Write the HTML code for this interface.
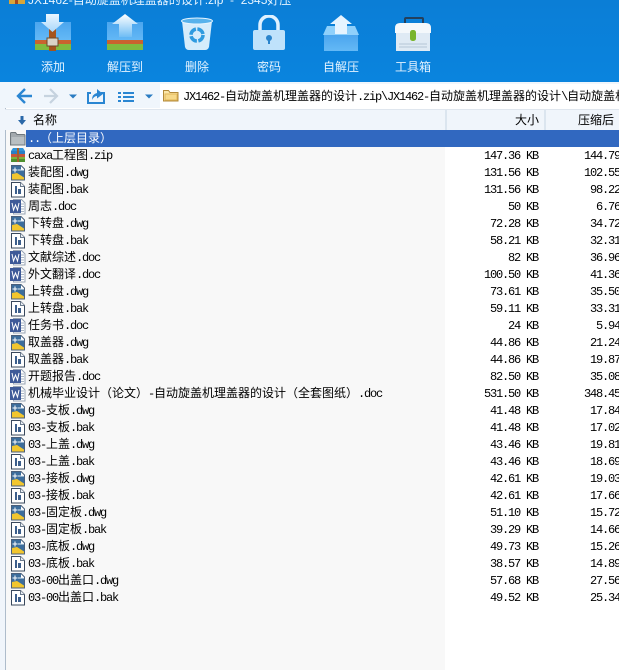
<!DOCTYPE html>
<html><head><meta charset="utf-8">
<style>
*{margin:0;padding:0;box-sizing:border-box}
html,body{width:619px;height:670px;overflow:hidden;background:#fff}
body{position:relative;font-family:"Liberation Mono","WenQuanYi Zen Hei","Noto Sans CJK SC",monospace;font-size:12px;color:#000}
.abs{position:absolute}
#top{left:0;top:0;width:619px;height:82px;background:linear-gradient(#0b7ed6,#0a84de);overflow:hidden}
.tb{position:absolute;top:59px;width:60px;text-align:center;color:#e4f3ff;font-size:12px;line-height:16px;font-family:"WenQuanYi Zen Hei","Noto Sans CJK SC",sans-serif}
#nav{left:0;top:82px;width:619px;height:26px;background:#f0f6fc}
#addr{left:160px;top:84px;width:459px;height:24px;background:#fff;white-space:nowrap;overflow:hidden;line-height:27px;padding-left:23px}
#hd{left:5px;top:109px;width:614px;height:21px;background:#f0f5fb;border-top:1px solid #dfe6ee;font-family:"WenQuanYi Zen Hei","Noto Sans CJK SC",sans-serif;line-height:19px}
#name{left:5px;top:130px;width:440px;height:540px;background:#f8f8f8}
#strip{left:0;top:108px;width:6px;height:562px;background:#f0f5fb;border-right:1px solid #aebccb}
#sel{left:26px;top:130px;width:593px;height:17px;background:#3168c0}
.r{position:absolute;left:0;width:619px;height:17px;line-height:17px;white-space:nowrap}
.n{position:absolute;left:28px;top:1px}
.s{position:absolute;right:81px;top:1px}
.p{position:absolute;right:-19px;top:1px}
i{font-style:normal;font-size:12px;letter-spacing:-1.2px}
.ic{position:absolute;left:10px;top:0;width:16px;height:17px}
</style></head><body>
<svg width="0" height="0" style="position:absolute"><defs>
<symbol id="dwg" viewBox="0 0 16 17"><path d="M1.500 1.500H11l3.500 3.500V16H1.500z" fill="#fff" stroke="#4a5f7a"/><path d="M2 2h9v4h3v9.500H2z" fill="#3c6d9c"/><path d="M2 10L7 9 14 13.500v2H2z" fill="#f2c62e"/><path d="M5 3.500v5M2.500 6h5" stroke="#fff"/><path d="M8 6h6" stroke="#e5eef6"/></symbol>
<symbol id="bak" viewBox="0 0 16 17"><path d="M1.500 1.500H10.500L14.500 5.500V16H1.500z" fill="#fff" stroke="#39485c"/><path d="M10.500 1.500V5.500H14.500" fill="#e8edf3" stroke="#6b7a8c"/><path d="M5 5h2v8H5zM8 8h3v5H8z" fill="#3d5f8c"/></symbol>
<symbol id="doc" viewBox="0 0 16 17"><path d="M3.500 1.500H11.500L15 5V16H3.500z" fill="#fff" stroke="#97a3b3"/><path d="M11 6h3M11 8.500h3M11 11h3M11 13.500h3" stroke="#aab6c4"/><rect x="0" y="2" width="11" height="13" fill="#3e5a98"/><path d="M2 5l1.500 7 2-5 2 5L9 5" fill="none" stroke="#fff"/></symbol>
<symbol id="zip" viewBox="0 0 16 17"><path d="M1 4l2-3h10l2 3z" fill="#2f93d8"/><rect x="1" y="4" width="14" height="3" fill="#2a7fc4"/><rect x="1" y="7" width="14" height="3" fill="#c8563a"/><rect x="1" y="10" width="14" height="2" fill="#7fb23a"/><rect x="1" y="12" width="14" height="3" fill="#4e8f2e"/><rect x="7" y="1" width="2" height="14" fill="#a5612c"/></symbol>
<linearGradient id="bx" x1="0" y1="0" x2="0" y2="1"><stop offset="0" stop-color="#4ba5ee"/><stop offset="1" stop-color="#64b9f6"/></linearGradient>
<linearGradient id="ar" x1="0" y1="0" x2="0" y2="1"><stop offset="0" stop-color="#eaf6ff"/><stop offset="1" stop-color="#a9d8fb"/></linearGradient>
<linearGradient id="au" x1="0" y1="0" x2="0" y2="1"><stop offset="0" stop-color="#ffffff"/><stop offset="1" stop-color="#6fbdf5"/></linearGradient>
</defs></svg>

<div id="top" class="abs">
 <div class="abs" style="left:28px;top:-8px;color:#e4f3ff;white-space:nowrap;line-height:16px;font:12px/16px 'Liberation Sans','WenQuanYi Zen Hei',sans-serif">JX1462-自动旋盖机理盖器的设计.zip&nbsp;&nbsp;-&nbsp;&nbsp;2345好压</div>
 <svg class="abs" style="left:9px;top:0" width="16" height="4"><rect width="16" height="4" fill="#d8a63a"/><rect x="6" width="3" height="4" fill="#a5461c"/></svg>

 <svg class="abs" style="left:34px;top:12px" width="40" height="40" viewBox="0 0 40 40">
  <rect x="1" y="10" width="36" height="18" fill="url(#bx)"/><rect x="1" y="28" width="36" height="4" fill="#c9632f"/><rect x="1" y="32" width="36" height="6" fill="#7fbb3f"/><rect x="15" y="15" width="7" height="24" fill="#a5541c"/><rect x="13" y="26" width="11" height="8" fill="#d9d4c6" stroke="#6b4a2a"/>
  <path d="M12 2h13v8h5L18.500 20 7 10h5z" fill="url(#ar)"/></svg>
 <svg class="abs" style="left:106px;top:13px" width="40" height="38" viewBox="0 0 40 38">
  <rect x="1" y="9" width="36" height="19" fill="url(#bx)"/><rect x="1" y="27" width="36" height="4" fill="#c9632f"/><rect x="1" y="31" width="36" height="6" fill="#7fbb3f"/>
  <path d="M19 1L32 11h-6V24H13V11H6z" fill="url(#au)"/></svg>
 <svg class="abs" style="left:180px;top:17px" width="34" height="34" viewBox="0 0 34 34">
  <path d="M2 4h30l-3 26q-1 3-4 3H9q-3 0-4-3z" fill="#d5ecfb"/><ellipse cx="17" cy="4" rx="15.500" ry="3" fill="#57b2ec" stroke="#e7f5ff"/>
  <circle cx="17" cy="18" r="6" fill="none" stroke="#2e9be0" stroke-width="3.500" stroke-dasharray="8 1.500"/></svg>
 <svg class="abs" style="left:252px;top:15px" width="34" height="36" viewBox="0 0 34 36">
  <path d="M8 16V10a9 9 0 0 1 18 0v6" fill="none" stroke="#dff1ff" stroke-width="3.500"/><rect x="1" y="15" width="32" height="20" rx="2" fill="#bfe2fb"/><circle cx="17" cy="23" r="3" fill="#2a84cc"/><rect x="16" y="24" width="2" height="5" fill="#2a84cc"/></svg>
 <svg class="abs" style="left:320px;top:14px" width="42" height="38" viewBox="0 0 42 38">
  <path d="M3 21L7 12h28l4 9z" fill="#8fd0fb"/><rect x="4" y="21" width="34" height="16" fill="url(#bx)"/><path d="M21 1L32 10h-5v10H15V10h-5z" fill="#e6f4ff"/></svg>
 <svg class="abs" style="left:394px;top:16px" width="38" height="36" viewBox="0 0 38 36">
  <path d="M11 7V3q0-1 1-1h16q1 0 1 1v4" fill="none" stroke="#24405c" stroke-width="2"/><path d="M1 12q0-5 5-5h26q5 0 5 5v5H1z" fill="#f4f8fb"/><rect x="2" y="17" width="34" height="18" fill="#dfeaf4"/><rect x="16" y="14" width="6" height="11" rx="2.500" fill="#79b52c"/><path d="M5 28h28M5 31h28" stroke="#b4c6d6"/></svg>

 <div class="tb" style="left:23px">添加</div>
 <div class="tb" style="left:95px">解压到</div>
 <div class="tb" style="left:167px">删除</div>
 <div class="tb" style="left:239px">密码</div>
 <div class="tb" style="left:311px">自解压</div>
 <div class="tb" style="left:383px">工具箱</div>
</div>

<div id="nav" class="abs"></div>
<svg class="abs" style="left:0;top:82px" width="160" height="26" viewBox="0 0 160 26">
 <path d="M32 14H19M25 7l-7 7 7 7" fill="none" stroke="#2a86d2" stroke-width="2.400"/>
 <path d="M44 14h13M50 7l7 7-7 7" fill="none" stroke="#c6d3df" stroke-width="2.200"/>
 <path d="M69 12.500h8l-4 4z" fill="#2a7cc2"/>
 <path d="M91 11H88V21H104V11H101" fill="none" stroke="#2a86d2" stroke-width="2"/><path d="M92 18q0-6 5-7V7l6 5-6 4.500V14q-3 0-5 4z" fill="#2a86d2"/>
 <path d="M118 10h3v2h-3zM123 10h11v2h-11zM118 14h3v2h-3zM123 14h11v2h-11zM118 18h3v2h-3zM123 18h11v2h-11z" fill="#2a86d2"/>
 <path d="M145 12.500h8l-4 4z" fill="#2a7cc2"/>
</svg>
<div id="addr" class="abs"><i>JX1462-</i>自动旋盖机理盖器的设计<i>.zip\JX1462-</i>自动旋盖机理盖器的设计<i>\</i>自动旋盖机理盖器的设计</div>
<svg class="abs" style="left:163px;top:88px" width="16" height="15" viewBox="0 0 16 15"><path d="M.5 13V2.500h5l1.500 2h8V13z" fill="#fbe6a8" stroke="#b38a3a"/><rect x="2" y="6" width="12" height="6" fill="#f7d98a" stroke="#e0b75a"/></svg>

<div id="name" class="abs"></div>
<div id="strip" class="abs"></div>
<div id="hd" class="abs">
 <svg class="abs" style="left:13px;top:6px" width="8" height="9" viewBox="0 0 8 9"><path d="M2.500 0h3v4H8L4 9 0 4h2.500z" fill="#2a68a8"/></svg>
 <span class="abs" style="left:28px;top:0">名称</span>
 <div class="abs" style="left:440px;top:0;width:2px;height:20px;background:#dbe5ef"></div>
 <span class="abs" style="left:510px;top:0">大小</span>
 <div class="abs" style="left:539px;top:0;width:2px;height:20px;background:#dbe5ef"></div>
 <span class="abs" style="left:573px;top:0">压缩后大小</span>
</div>
<div id="sel" class="abs"></div>
<svg class="abs" style="left:10px;top:131px" width="16" height="15" viewBox="0 0 16 15"><path d="M.5 14V2.500q0-1 1-1h4l1.500 2h7q1 0 1 1V14z" fill="#a3a9ad" stroke="#6f777c"/><rect x="1.500" y="6" width="13" height="7.500" fill="#b9bfc2"/></svg>

<div class="r" style="top:130px;color:#fff"><span class="n"><i>..</i>（上层目录）</span></div>
<div class="r" style="top:147px"><svg class="ic"><use href="#zip"/></svg><span class="n"><i>caxa</i>工程图<i>.zip</i></span><span class="s"><i>147.36 KB</i></span><span class="p"><i>144.79 KB</i></span></div>
<div class="r" style="top:164px"><svg class="ic"><use href="#dwg"/></svg><span class="n">装配图<i>.dwg</i></span><span class="s"><i>131.56 KB</i></span><span class="p"><i>102.55 KB</i></span></div>
<div class="r" style="top:181px"><svg class="ic"><use href="#bak"/></svg><span class="n">装配图<i>.bak</i></span><span class="s"><i>131.56 KB</i></span><span class="p"><i>98.22 KB</i></span></div>
<div class="r" style="top:198px"><svg class="ic"><use href="#doc"/></svg><span class="n">周志<i>.doc</i></span><span class="s"><i>50 KB</i></span><span class="p"><i>6.76 KB</i></span></div>
<div class="r" style="top:215px"><svg class="ic"><use href="#dwg"/></svg><span class="n">下转盘<i>.dwg</i></span><span class="s"><i>72.28 KB</i></span><span class="p"><i>34.72 KB</i></span></div>
<div class="r" style="top:232px"><svg class="ic"><use href="#bak"/></svg><span class="n">下转盘<i>.bak</i></span><span class="s"><i>58.21 KB</i></span><span class="p"><i>32.31 KB</i></span></div>
<div class="r" style="top:249px"><svg class="ic"><use href="#doc"/></svg><span class="n">文献综述<i>.doc</i></span><span class="s"><i>82 KB</i></span><span class="p"><i>36.96 KB</i></span></div>
<div class="r" style="top:266px"><svg class="ic"><use href="#doc"/></svg><span class="n">外文翻译<i>.doc</i></span><span class="s"><i>100.50 KB</i></span><span class="p"><i>41.36 KB</i></span></div>
<div class="r" style="top:283px"><svg class="ic"><use href="#dwg"/></svg><span class="n">上转盘<i>.dwg</i></span><span class="s"><i>73.61 KB</i></span><span class="p"><i>35.50 KB</i></span></div>
<div class="r" style="top:300px"><svg class="ic"><use href="#bak"/></svg><span class="n">上转盘<i>.bak</i></span><span class="s"><i>59.11 KB</i></span><span class="p"><i>33.31 KB</i></span></div>
<div class="r" style="top:317px"><svg class="ic"><use href="#doc"/></svg><span class="n">任务书<i>.doc</i></span><span class="s"><i>24 KB</i></span><span class="p"><i>5.94 KB</i></span></div>
<div class="r" style="top:334px"><svg class="ic"><use href="#dwg"/></svg><span class="n">取盖器<i>.dwg</i></span><span class="s"><i>44.86 KB</i></span><span class="p"><i>21.24 KB</i></span></div>
<div class="r" style="top:351px"><svg class="ic"><use href="#bak"/></svg><span class="n">取盖器<i>.bak</i></span><span class="s"><i>44.86 KB</i></span><span class="p"><i>19.87 KB</i></span></div>
<div class="r" style="top:368px"><svg class="ic"><use href="#doc"/></svg><span class="n">开题报告<i>.doc</i></span><span class="s"><i>82.50 KB</i></span><span class="p"><i>35.08 KB</i></span></div>
<div class="r" style="top:385px"><svg class="ic"><use href="#doc"/></svg><span class="n">机械毕业设计（论文）<i>-</i>自动旋盖机理盖器的设计（全套图纸）<i>.doc</i></span><span class="s"><i>531.50 KB</i></span><span class="p"><i>348.45 KB</i></span></div>
<div class="r" style="top:402px"><svg class="ic"><use href="#dwg"/></svg><span class="n"><i>03-</i>支板<i>.dwg</i></span><span class="s"><i>41.48 KB</i></span><span class="p"><i>17.84 KB</i></span></div>
<div class="r" style="top:419px"><svg class="ic"><use href="#bak"/></svg><span class="n"><i>03-</i>支板<i>.bak</i></span><span class="s"><i>41.48 KB</i></span><span class="p"><i>17.02 KB</i></span></div>
<div class="r" style="top:436px"><svg class="ic"><use href="#dwg"/></svg><span class="n"><i>03-</i>上盖<i>.dwg</i></span><span class="s"><i>43.46 KB</i></span><span class="p"><i>19.81 KB</i></span></div>
<div class="r" style="top:453px"><svg class="ic"><use href="#bak"/></svg><span class="n"><i>03-</i>上盖<i>.bak</i></span><span class="s"><i>43.46 KB</i></span><span class="p"><i>18.69 KB</i></span></div>
<div class="r" style="top:470px"><svg class="ic"><use href="#dwg"/></svg><span class="n"><i>03-</i>接板<i>.dwg</i></span><span class="s"><i>42.61 KB</i></span><span class="p"><i>19.03 KB</i></span></div>
<div class="r" style="top:487px"><svg class="ic"><use href="#bak"/></svg><span class="n"><i>03-</i>接板<i>.bak</i></span><span class="s"><i>42.61 KB</i></span><span class="p"><i>17.66 KB</i></span></div>
<div class="r" style="top:504px"><svg class="ic"><use href="#dwg"/></svg><span class="n"><i>03-</i>固定板<i>.dwg</i></span><span class="s"><i>51.10 KB</i></span><span class="p"><i>15.72 KB</i></span></div>
<div class="r" style="top:521px"><svg class="ic"><use href="#bak"/></svg><span class="n"><i>03-</i>固定板<i>.bak</i></span><span class="s"><i>39.29 KB</i></span><span class="p"><i>14.66 KB</i></span></div>
<div class="r" style="top:538px"><svg class="ic"><use href="#dwg"/></svg><span class="n"><i>03-</i>底板<i>.dwg</i></span><span class="s"><i>49.73 KB</i></span><span class="p"><i>15.26 KB</i></span></div>
<div class="r" style="top:555px"><svg class="ic"><use href="#bak"/></svg><span class="n"><i>03-</i>底板<i>.bak</i></span><span class="s"><i>38.57 KB</i></span><span class="p"><i>14.89 KB</i></span></div>
<div class="r" style="top:572px"><svg class="ic"><use href="#dwg"/></svg><span class="n"><i>03-00</i>出盖口<i>.dwg</i></span><span class="s"><i>57.68 KB</i></span><span class="p"><i>27.56 KB</i></span></div>
<div class="r" style="top:589px"><svg class="ic"><use href="#bak"/></svg><span class="n"><i>03-00</i>出盖口<i>.bak</i></span><span class="s"><i>49.52 KB</i></span><span class="p"><i>25.34 KB</i></span></div>
</body></html>
